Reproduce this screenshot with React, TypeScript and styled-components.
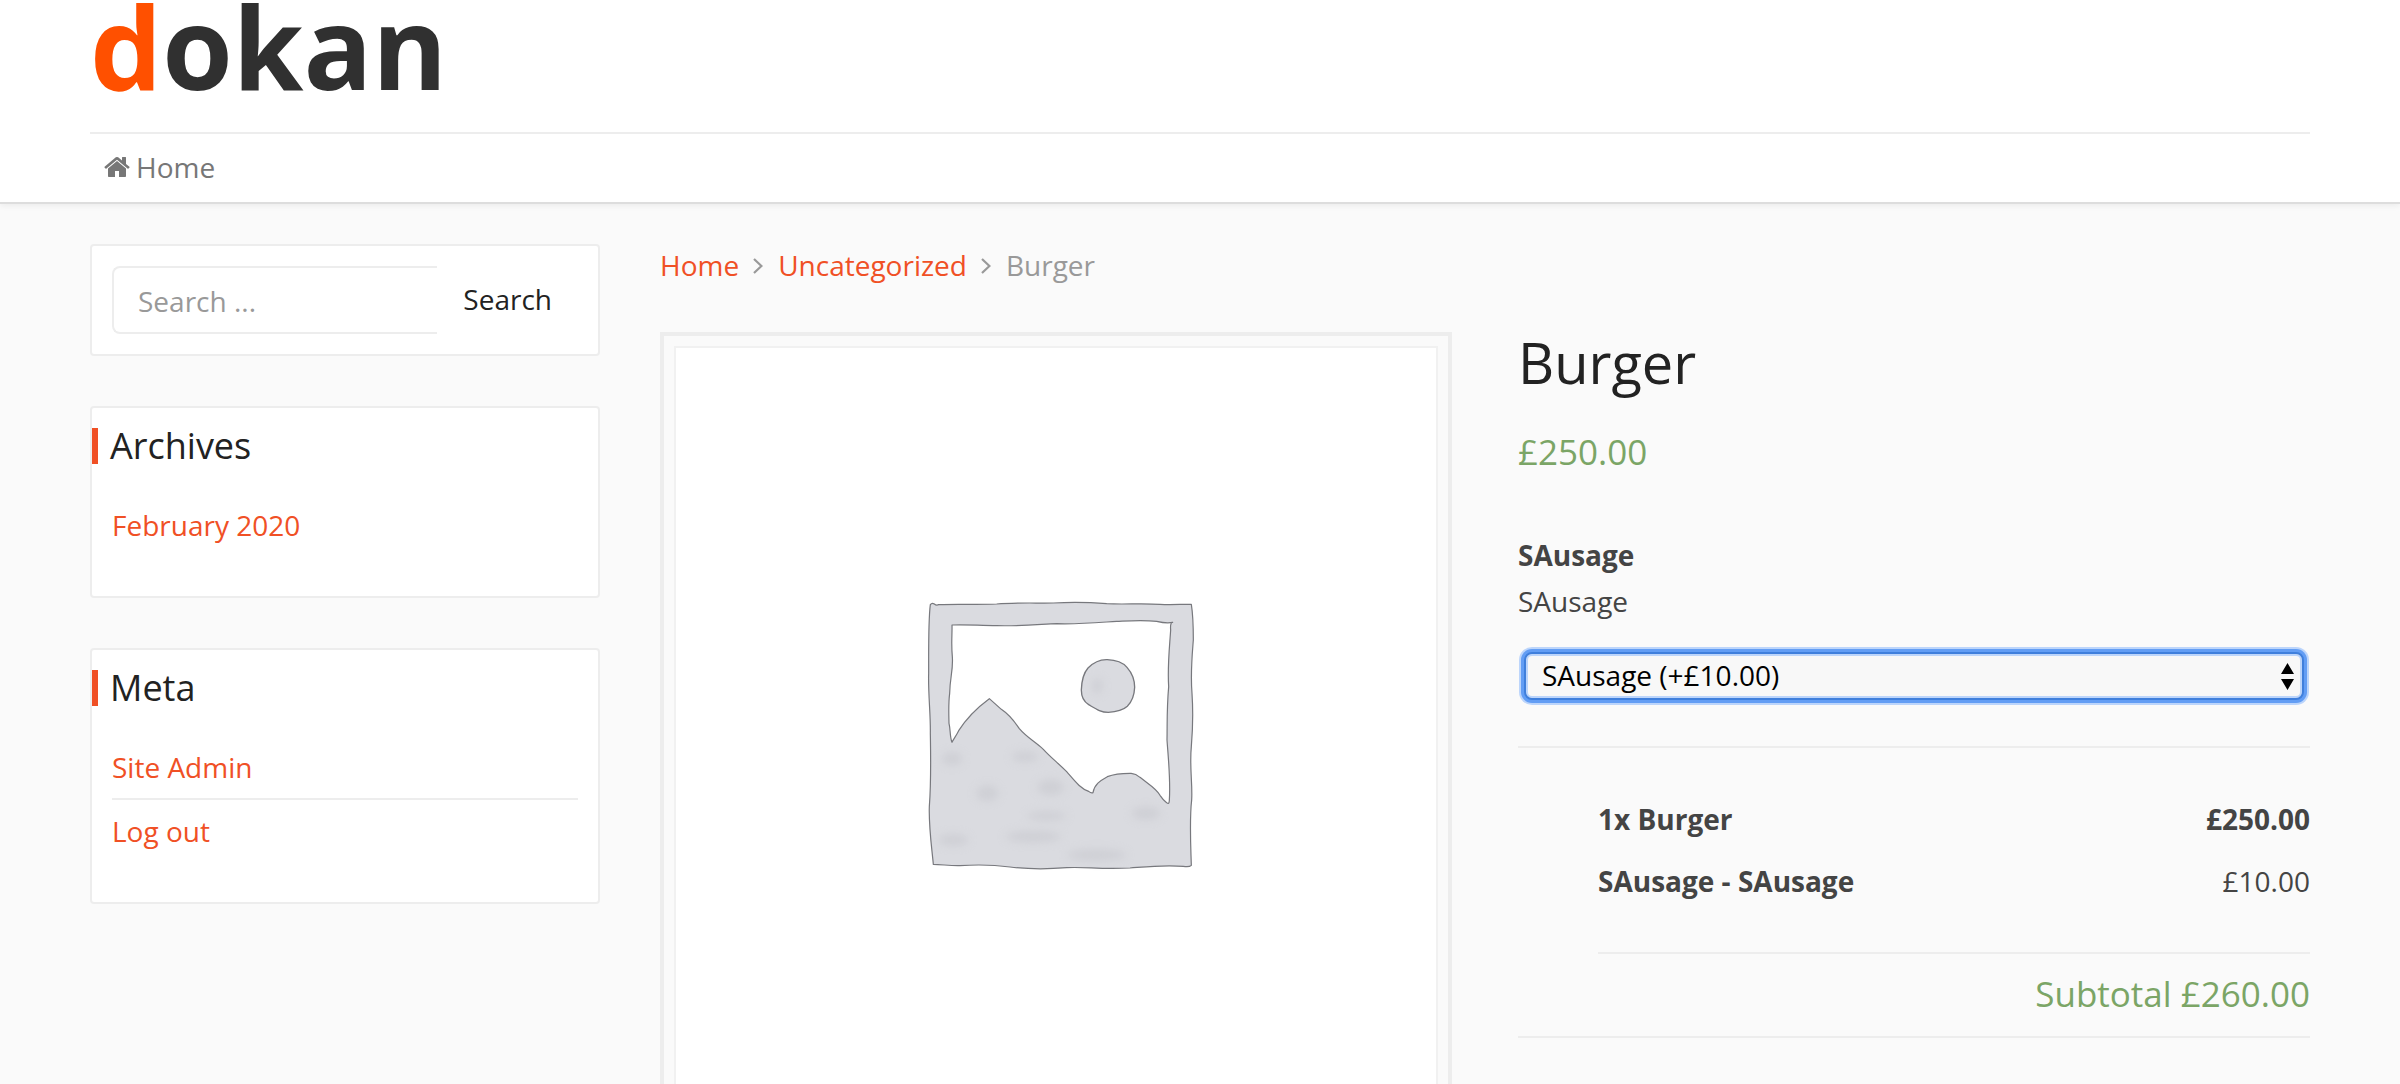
import React from "react";
import styled, { createGlobalStyle } from "styled-components";

const color = {
  accent: "#f05025",
  line: "#ededed",
  heading: "#222222",
  text: "#444444",
  muted: "#999999",
  price: "#7ba566",
};

const GlobalStyle = createGlobalStyle`
  *, *::before, *::after { box-sizing: border-box; }
  body {
    margin: 0;
    background: #fafafa;
    color: ${color.text};
    font-family: "Open Sans", "Noto Sans", sans-serif;
    font-size: 28px;
    line-height: 42px;
  }
  h1, h2, p, ul, ol, table { margin: 0; padding: 0; font-weight: 400; }
  ul, ol { list-style: none; }
  input, button, select { font: inherit; margin: 0; }
`;

const Container = styled.div`
  padding: 0 90px;
`;

const Header = styled.header`
  background: #ffffff;
  border-bottom: 2px solid #dddddd;
  box-shadow: 0 2px 6px rgba(0, 0, 0, 0.06);
`;

const Brand = styled.a`
  display: block;
  height: 132px;
  color: #303030;
  font-size: 114px;
  font-weight: 700;
  line-height: 92px;
  text-decoration: none;
`;

const BrandInitial = styled.span`
  color: #ff5000;
`;

const Nav = styled.nav`
  display: flex;
  border-top: 2px solid ${color.line};
  padding: 12px 14px 14px;
`;

const NavLink = styled.a`
  display: flex;
  align-items: center;
  gap: 6px;
  color: #777777;
  text-decoration: none;
`;

const Content = styled(Container)`
  display: grid;
  grid-template-columns: minmax(0, 510fr) minmax(0, 1650fr);
  gap: 60px;
  padding-top: 40px;
`;

const Sidebar = styled.aside`
  display: flex;
  flex-direction: column;
  gap: 50px;
`;

const Widget = styled.section`
  background: #ffffff;
  border: 2px solid ${color.line};
  border-radius: 4px;
  padding: 20px;
`;

const WidgetTitle = styled.h2`
  margin: 0 0 30px -20px;
  border-left: 6px solid ${color.accent};
  padding-left: 12px;
  color: ${color.heading};
  font-size: 36px;
  line-height: 36px;
`;

const WidgetList = styled.ul`
  padding-bottom: 20px;
`;

const WidgetItem = styled.li`
  padding: 10px 0;
  & + & { border-top: 2px solid ${color.line}; }
`;

const AccentLink = styled.a`
  color: ${color.accent};
  text-decoration: none;
`;

const SearchForm = styled.form`
  display: flex;
`;

const SearchInput = styled.input`
  flex: 1;
  min-width: 0;
  height: 68px;
  padding: 2px 24px 0;
  border: 2px solid ${color.line};
  border-right: 0;
  border-radius: 8px 0 0 8px;
  background: #ffffff;
  color: ${color.text};
  outline: none;
  &::placeholder { color: ${color.muted}; opacity: 1; }
`;

const SearchButton = styled.button`
  padding: 0 26px 2px;
  border: 0;
  background: #ffffff;
  color: ${color.heading};
`;

const Breadcrumb = styled.ol`
  display: flex;
  align-items: center;
  color: ${color.muted};
  margin-bottom: 46px;
`;

const Crumb = styled.li`
  display: flex;
  align-items: center;
`;

const Chevron = styled.svg`
  margin: 2px 15px 0 14px;
`;

const Product = styled.article`
  display: grid;
  grid-template-columns: minmax(0, 1fr) minmax(0, 1fr);
  gap: 66px;
  align-items: start;
`;

const Gallery = styled.figure`
  margin: 0;
  border: 4px solid ${color.line};
  padding: 10px;
`;

const Placeholder = styled.svg`
  display: block;
  width: 100%;
  border: 2px solid #f1f1f1;
  background: #ffffff;
`;

const Title = styled.h1`
  color: ${color.heading};
  font-size: 56px;
  line-height: 60px;
`;

const Price = styled.p`
  margin: 34px 0 54px;
  color: ${color.price};
  font-size: 35px;
  line-height: 52px;
`;

const AddonLabel = styled.label`
  display: block;
  font-weight: 700;
  line-height: 46px;
`;

const AddonNote = styled.p`
  line-height: 46px;
`;

const SelectWrap = styled.div`
  position: relative;
  margin: 28px 6px 46px;
`;

const Select = styled.select`
  display: block;
  width: 100%;
  height: 48px;
  padding: 0 40px 2px 16px;
  appearance: none;
  border: 2px solid #3f7fdc;
  border-radius: 8px;
  background: #f8f8f8;
  color: #000000;
  line-height: 42px;
  outline: none;
  box-shadow: 0 0 0 3px #629df4, 0 0 0 5px #bcd5fb, inset 0 0 0 2px #bcd5fb;
`;

const SelectArrows = styled.svg`
  position: absolute;
  top: 11px;
  right: 10px;
  pointer-events: none;
`;

const Totals = styled.section`
  border-top: 2px solid ${color.line};
  border-bottom: 2px solid ${color.line};
  padding: 40px 0 0 80px;
`;

const Lines = styled.table`
  width: 100%;
  border-collapse: collapse;
  margin-bottom: 40px;
`;

const LineName = styled.th`
  padding: 10px 0;
  text-align: left;
  font-weight: 700;
`;

const LineAmount = styled.td<{ $bold?: boolean }>`
  padding: 10px 0;
  text-align: right;
  font-weight: ${(p) => (p.$bold ? 700 : 400)};
`;

const Subtotal = styled.p`
  border-top: 2px solid ${color.line};
  padding: 14px 0 16px;
  color: ${color.price};
  font-size: 35px;
  line-height: 52px;
  text-align: right;
`;

const HomeIcon = () => (
  <svg width="26" height="28" viewBox="0 0 1664 1792" fill="currentColor" aria-hidden="true">
    <path d="M1408 992v480q0 26-19 45t-45 19H960v-384H704v384H320q-26 0-45-19t-19-45V992q0-1 .5-3t.5-3l575-474 575 474q1 2 1 6zm223-69l-62 74q-8 9-21 11h-3q-13 0-21-7L832 424 140 1001q-12 8-24 7-13-2-21-11l-62-74q-8-10-7-23.5t11-21.5l719-599q32-26 76-26t76 26l244 204V288q0-14 9-23t23-9h192q14 0 23 9t9 23v408l219 182q10 8 11 21.5t-7 23.5z" />
  </svg>
);

const Separator = () => (
  <Chevron width="10" height="16" viewBox="0 0 10 16" aria-hidden="true">
    <path d="M1 1l7.4 7L1 15" fill="none" stroke="currentColor" strokeWidth="2.2" />
  </Chevron>
);

const ProductImage = () => (
  <Placeholder viewBox="0 0 760 760" role="img" aria-label="Awaiting product image">
    <defs>
      <filter id="wash" x="-20%" y="-20%" width="140%" height="140%">
        <feGaussianBlur stdDeviation="12" />
      </filter>
    </defs>
    <g transform="translate(224 232) scale(.33333)">
      <path
        fill="#dadbe0"
        fillRule="evenodd"
        stroke="#77787d"
        strokeWidth="3.6"
        strokeLinejoin="round"
        d="M91 74Q96 67 103 72Q109 77 116 74C180 71 225 75 290 72C350 67 410 70 460 69C530 65 570 67 620 71C680 74 720 69 780 73C820 75 850 72 874 73Q880 110 880 180C876 230 871 280 876 340C880 400 879 440 874 500C868 560 878 610 875 660C868 720 872 790 874 856Q868 862 850 859C790 854 740 860 690 864C600 869 560 860 500 863C430 869 370 866 330 861C270 853 210 855 180 857C150 858 125 853 100 853C95 800 86 740 88 680C94 600 92 520 91 460C92 400 84 340 86 280C86 200 85 120 91 74ZM156 135C200 133 240 137 290 137C360 139 420 133 470 131C540 133 590 128 650 124C700 122 730 120 770 124Q800 131 818 127Q810 128 812 150C808 210 802 260 806 320C800 390 802 430 801 480C806 550 812 600 808 662Q807 675 800 668Q790 661 780 646C770 626 745 612 720 592C706 580 700 581 690 580C660 580 640 583 622 590C600 602 583 614 579 638Q574 641 566 634C540 625 524 602 500 575C470 545 455 535 430 508C405 485 380 472 358 446C342 422 325 402 304 388L268 356C230 384 196 420 176 452C168 468 162 475 156 487C149 470 152 450 147 430C146 390 145 370 149 340C150 290 160 270 157 230C153 190 157 160 156 135Z"
      />
      <path
        fill="#dadbe0"
        stroke="#77787d"
        strokeWidth="4"
        d="M622 239C650 240 668 247 681 262C697 280 704 300 704 322C703 346 697 364 682 379C668 392 648 396 625 397C602 397 588 387 566 374C550 364 544 350 544 330C545 300 550 280 564 264C580 248 600 238 622 239Z"
      />
      <g fill="#c4c5cb" opacity=".5" filter="url(#wash)">
        <ellipse cx="156" cy="536" rx="32" ry="20" />
        <ellipse cx="262" cy="640" rx="34" ry="24" />
        <ellipse cx="452" cy="622" rx="40" ry="24" />
        <ellipse cx="400" cy="770" rx="84" ry="18" />
        <ellipse cx="440" cy="708" rx="60" ry="14" />
        <ellipse cx="590" cy="825" rx="90" ry="18" />
        <ellipse cx="738" cy="700" rx="44" ry="20" />
        <ellipse cx="160" cy="780" rx="46" ry="18" />
        <ellipse cx="592" cy="318" rx="16" ry="24" />
        <ellipse cx="375" cy="530" rx="40" ry="16" />
      </g>
    </g>
  </Placeholder>
);

export default function App() {
  return (
    <>
      <GlobalStyle />
      <Header>
        <Container>
          <Brand href="#">
            <BrandInitial>d</BrandInitial>okan
          </Brand>
          <Nav>
            <NavLink href="#">
              <HomeIcon />
              Home
            </NavLink>
          </Nav>
        </Container>
      </Header>
      <Content>
        <Sidebar>
          <Widget>
            <SearchForm role="search">
              <SearchInput type="text" placeholder="Search ..." aria-label="Search" />
              <SearchButton type="submit">Search</SearchButton>
            </SearchForm>
          </Widget>
          <Widget>
            <WidgetTitle>Archives</WidgetTitle>
            <WidgetList>
              <WidgetItem>
                <AccentLink href="#">February 2020</AccentLink>
              </WidgetItem>
            </WidgetList>
          </Widget>
          <Widget>
            <WidgetTitle>Meta</WidgetTitle>
            <WidgetList>
              <WidgetItem>
                <AccentLink href="#">Site Admin</AccentLink>
              </WidgetItem>
              <WidgetItem>
                <AccentLink href="#">Log out</AccentLink>
              </WidgetItem>
            </WidgetList>
          </Widget>
        </Sidebar>
        <main>
          <Breadcrumb>
            <Crumb>
              <AccentLink href="#">Home</AccentLink>
              <Separator />
            </Crumb>
            <Crumb>
              <AccentLink href="#">Uncategorized</AccentLink>
              <Separator />
            </Crumb>
            <Crumb>Burger</Crumb>
          </Breadcrumb>
          <Product>
            <Gallery>
              <ProductImage />
            </Gallery>
            <div>
              <Title>Burger</Title>
              <Price>£250.00</Price>
              <AddonLabel htmlFor="addon">SAusage</AddonLabel>
              <AddonNote>SAusage</AddonNote>
              <SelectWrap>
                <Select id="addon" defaultValue="sausage">
                  <option value="sausage">SAusage (+£10.00)</option>
                </Select>
                <SelectArrows width="13" height="27" viewBox="0 0 13 27" aria-hidden="true">
                  <path d="M0 11L6.5 0L13 11ZM0 16H13L6.5 27Z" />
                </SelectArrows>
              </SelectWrap>
              <Totals>
                <Lines>
                  <tbody>
                    <tr>
                      <LineName scope="row">1x Burger</LineName>
                      <LineAmount $bold>£250.00</LineAmount>
                    </tr>
                    <tr>
                      <LineName scope="row">SAusage - SAusage</LineName>
                      <LineAmount>£10.00</LineAmount>
                    </tr>
                  </tbody>
                </Lines>
                <Subtotal>Subtotal £260.00</Subtotal>
              </Totals>
            </div>
          </Product>
        </main>
      </Content>
    </>
  );
}
